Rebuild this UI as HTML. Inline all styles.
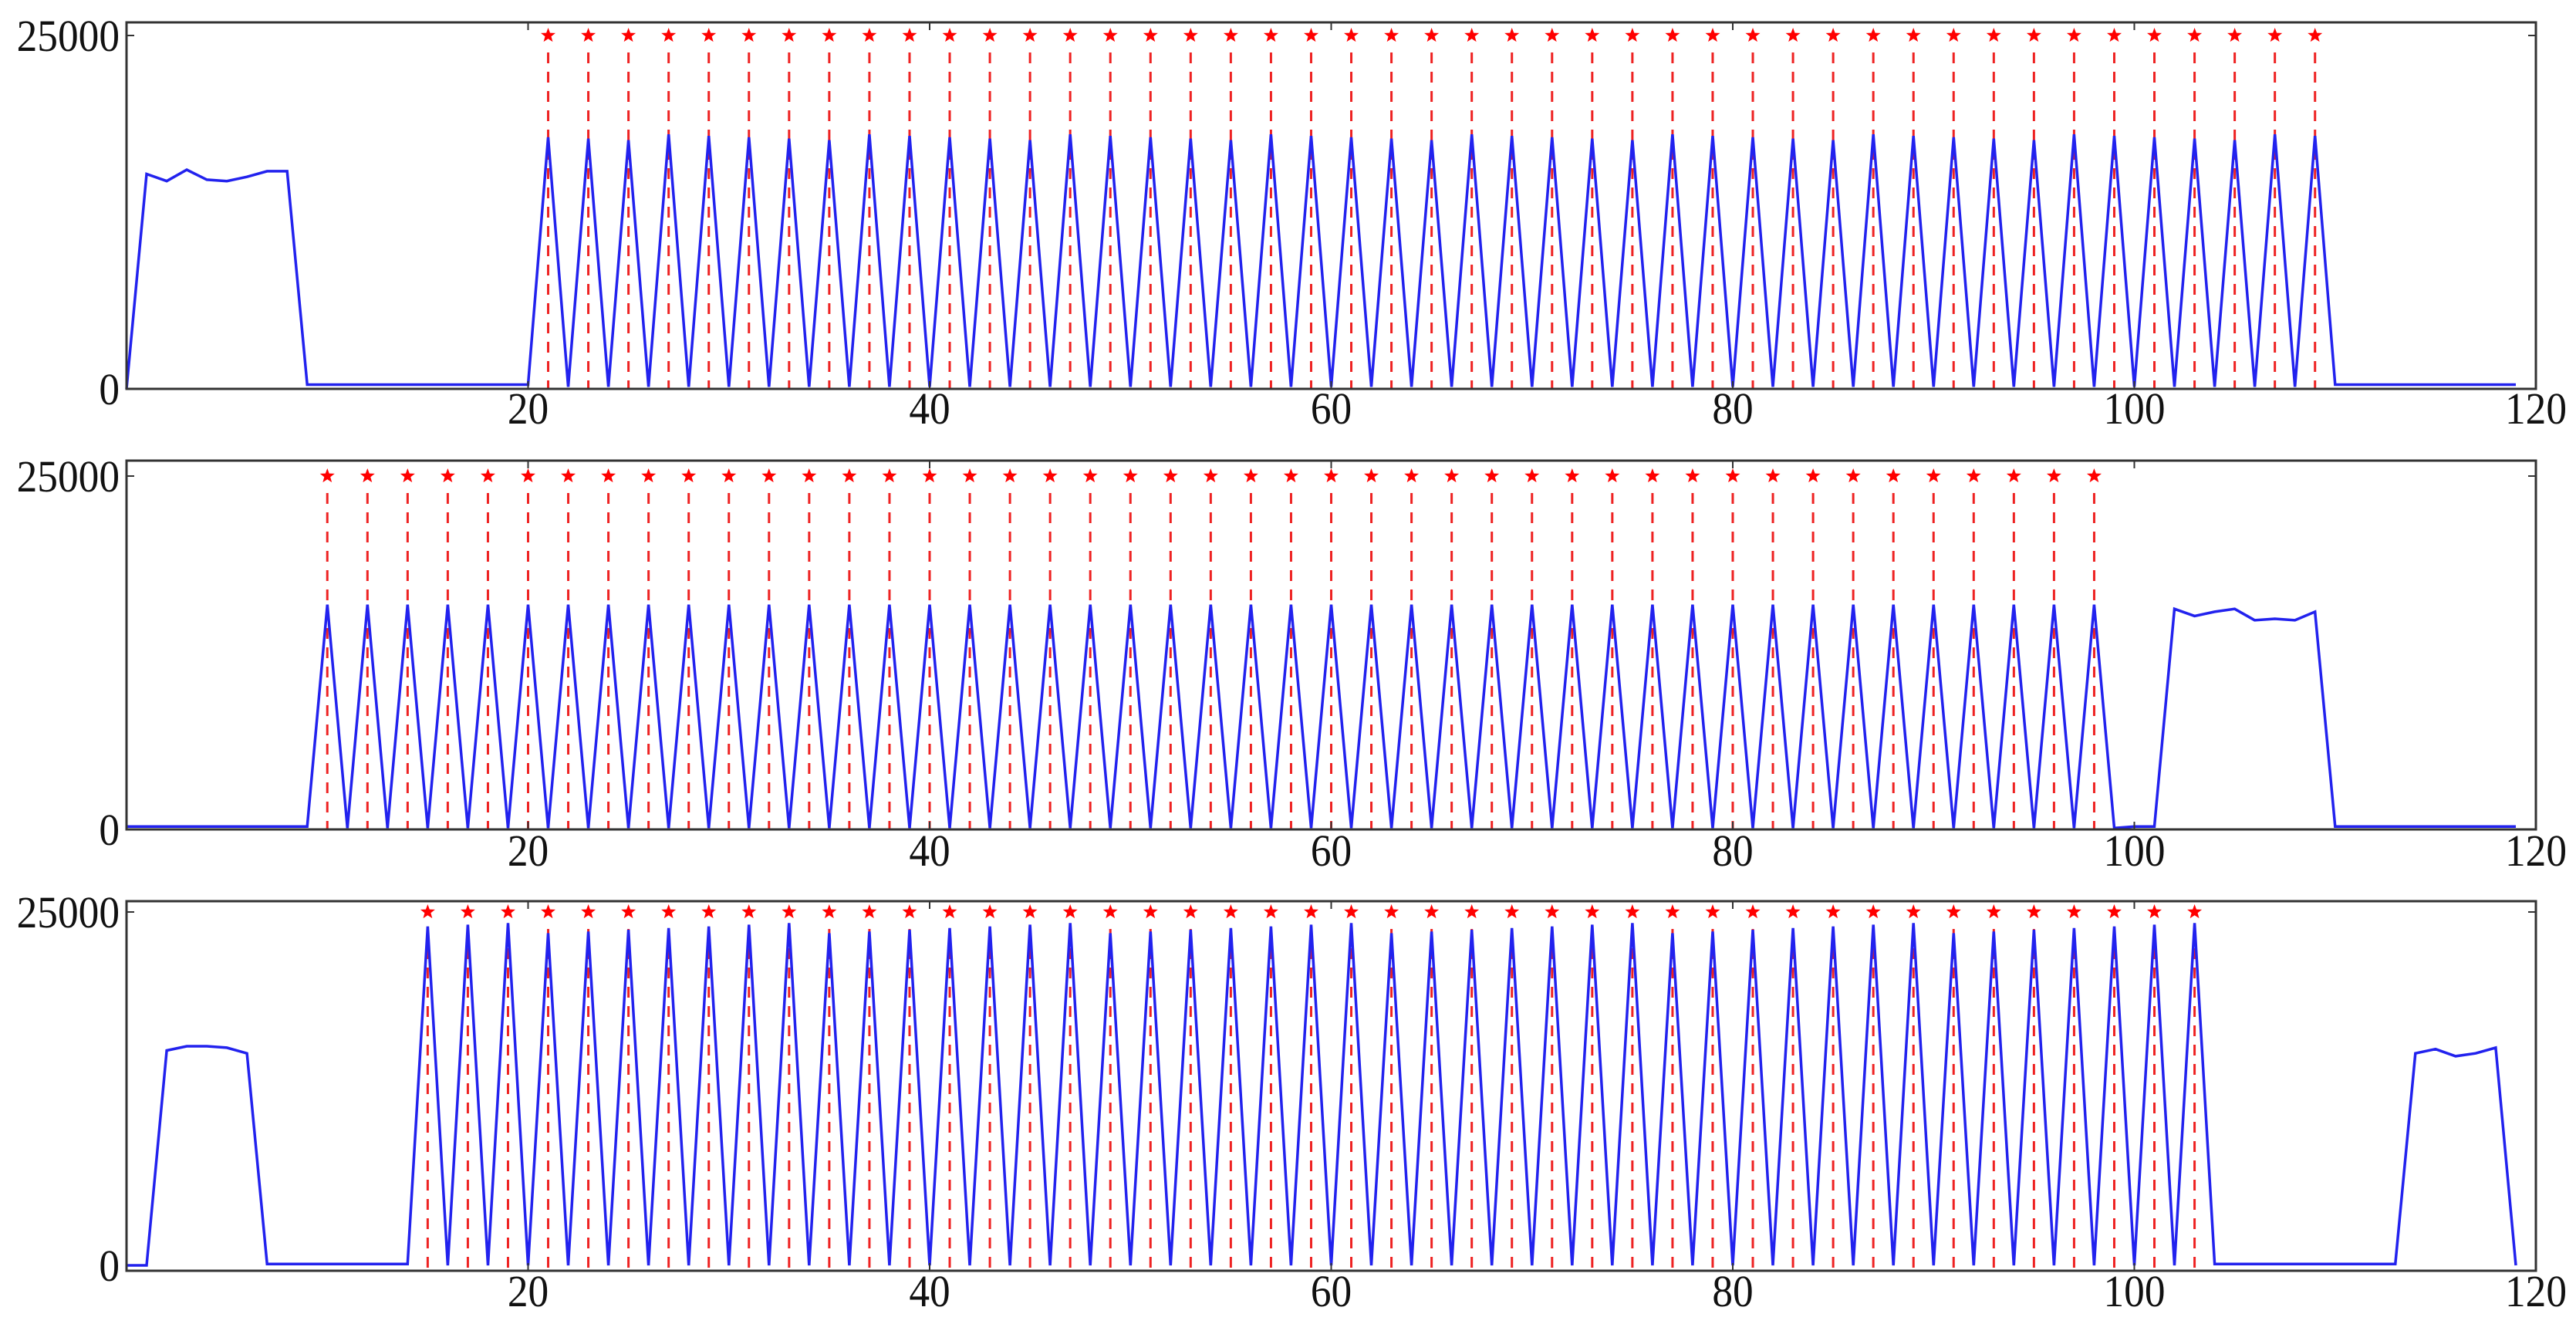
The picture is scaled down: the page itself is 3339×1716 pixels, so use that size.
<!DOCTYPE html>
<html><head><meta charset="utf-8">
<style>
html,body{margin:0;padding:0;background:#fff;}
svg{display:block;}
text{font-family:"Liberation Serif",serif;font-size:58px;fill:#111;}
</style></head>
<body>
<svg id="s" width="3339" height="1716" viewBox="0 0 3339 1716" xmlns="http://www.w3.org/2000/svg">
<rect width="3339" height="1716" fill="#fff"/>
<g id="plots"></g>
<g id="labels"></g>
</svg>
<script>
(function(){
var NS="http://www.w3.org/2000/svg";
var g=document.getElementById("plots");
var lab=document.getElementById("labels");
var L=164,R=3287,U=(R-L)/120;
function X(v){return L+v*U;}
function el(n,a,p){var e=document.createElementNS(NS,n);for(var k in a)e.setAttribute(k,a[k]);(p||g).appendChild(e);return e;}
function txt(x,y,s,anc){var t=el("text",{x:0,y:0,"text-anchor":anc,transform:"translate("+x+","+y+") scale(0.92,1)"},lab);t.textContent=s;}
function star(cx,cy,r){var p=[];for(var i=0;i<10;i++){var rr=i%2?r*0.42:r;var a=-Math.PI/2+i*Math.PI/5;p.push((cx+rr*Math.cos(a)).toFixed(1)+","+(cy+rr*Math.sin(a)).toFixed(1));}return p.join(" ");}
function axis(top,bot,zero,data,stars,lby){
  var sc=458/25000;
  function Y(v){return zero-v*sc;}
  var y25=Y(25000);
  stars.forEach(function(s){
    el("line",{x1:X(s),x2:X(s),y1:y25+22,y2:bot,stroke:"#ee2222","stroke-width":3,"stroke-dasharray":"14,11"});
  });
  var pts=data.map(function(v,i){return X(i).toFixed(1)+","+Y(v).toFixed(1);}).join(" ");
  el("polyline",{points:pts,fill:"none",stroke:"#2222ee","stroke-width":3.5});
  stars.forEach(function(s){ el("polygon",{points:star(X(s),y25,10),fill:"#ff0000"}); });
  el("rect",{x:L,y:top,width:R-L,height:bot-top,fill:"none",stroke:"#333","stroke-width":3});
  [20,40,60,80,100].forEach(function(t){
    el("line",{x1:X(t),x2:X(t),y1:bot,y2:bot-10,stroke:"#333","stroke-width":2});
    el("line",{x1:X(t),x2:X(t),y1:top,y2:top+10,stroke:"#333","stroke-width":2});
  });
  el("line",{x1:L,x2:L+10,y1:y25,y2:y25,stroke:"#333","stroke-width":2});
  el("line",{x1:R,x2:R-10,y1:y25,y2:y25,stroke:"#333","stroke-width":2});
  txt(155,y25+20,"25000","end");
  txt(155,zero+20,"0","end");
  [20,40,60,80,100,120].forEach(function(t){txt(X(t),lby,String(t),"middle");});
}
var d1=[0,15200,14700,15500,14800,14700,15000,15400,15400];
for(var i=9;i<=20;i++)d1.push(300);
var s1=[];
for(var i=21;i<=110;i++){ if(i%2){d1.push(17600+((i*37)%5)*100);s1.push(i);} else d1.push(i==110?300:150); }
while(d1.length<120)d1.push(300);
axis(29,504,504,d1,s1,549);
var d2=[];for(var i=0;i<=9;i++)d2.push(200);
var s2=[];
for(var i=10;i<=99;i++){ if(i%2==0){d2.push(15900);s2.push(i);} else d2.push(100); }
d2.push(200,200,15600,15100,15400,15600,14800,14900,14800,15400);
while(d2.length<120)d2.push(200);
axis(597,1075,1075,d2,s2,1122);
var d3=[0,0,15200,15500,15500,15400,15000];
for(var i=7;i<=14;i++)d3.push(100);
var s3=[];
for(var i=15;i<=103;i++){ if(i%2){d3.push(23500+((i*53)%7)*120);s3.push(i);} else d3.push(0); }
for(var i=104;i<=113;i++)d3.push(100);
d3.push(15000,15300,14800,15000,15400,0);
axis(1168,1647,1640,d3,s3,1693);
})();
</script>
</body></html>
